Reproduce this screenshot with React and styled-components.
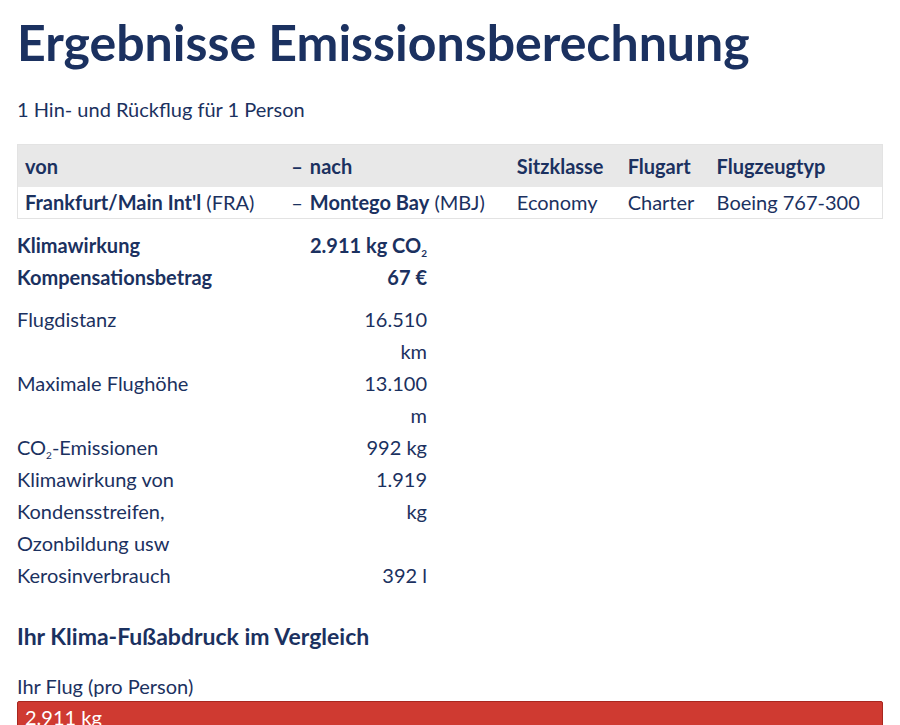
import React from "react";
import styled, { createGlobalStyle } from "styled-components";

const Global = createGlobalStyle`
  body { margin: 0; background: #fff; font-family: Lato, "Open Sans", sans-serif; color: #1b3160; }
`;

const Page = styled.div`
  padding: 0 17px;
`;

const Title = styled.h1`
  margin: 12px 0 0;
  font-size: 50px;
  font-weight: 700;
  line-height: 60px;
`;

const Sub = styled.p`
  margin: 24px 0 22px;
  font-size: 20px;
  line-height: 26px;
`;

const FlightTable = styled.table`
  width: 100%;
  border-collapse: collapse;
  font-size: 20px;
  border: 1px solid #e3e3e3;

  th {
    background: #e8e8e8;
    text-align: left;
    font-weight: 700;
    padding: 8px 8px 8px 7px;
    height: 26px;
  }
  td {
    padding: 3px 8px 4px 7px;
    white-space: nowrap;
  }
  th.dash, td.dash { padding-right: 0; width: 1px; }
`;

const Summary = styled.table`
  width: 410px;
  border-collapse: collapse;
  margin-top: 10px;
  font-size: 20px;
  line-height: 32px;

  td { padding: 0; vertical-align: top; }
  td.num { text-align: right; }
  tr.bold td { font-weight: 700; }
  tr.gap td { padding-top: 10px; }
`;

const Sub2 = styled.sub`
  font-size: 10px;
  vertical-align: -4px;
  line-height: 0;
`;

const NumCell = styled.td`
  width: ${(p) => p.$w || "auto"};
`;

const H2 = styled.h2`
  margin: 30px 0 0;
  font-size: 23px;
  font-weight: 700;
  line-height: 30px;
`;

const BarLabel = styled.div`
  margin-top: 22px;
  font-size: 20px;
  line-height: 26px;
`;

const Bar = styled.div`
  margin-top: 2px;
  height: 30px;
  background: #cf3a31;
  border: 1px solid #a8271f;
  border-radius: 2px;
  color: #fff;
  font-size: 20px;
  line-height: 30px;
  padding-left: 7px;
`;

export default function App() {
  return (
    <Page>
      <Global />
      <Title>Ergebnisse Emissionsberechnung</Title>
      <Sub>1 Hin- und Rückflug für 1 Person</Sub>
      <FlightTable>
        <thead>
          <tr>
            <th>von</th>
            <th className="dash">–</th>
            <th>nach</th>
            <th>Sitzklasse</th>
            <th>Flugart</th>
            <th>Flugzeugtyp</th>
          </tr>
        </thead>
        <tbody>
          <tr>
            <td><b>Frankfurt/Main Int'l</b> (FRA)</td>
            <td className="dash">–</td>
            <td><b>Montego Bay</b> (MBJ)</td>
            <td>Economy</td>
            <td>Charter</td>
            <td>Boeing 767-300</td>
          </tr>
        </tbody>
      </FlightTable>
      <Summary>
        <tbody>
          <tr className="bold">
            <td>Klimawirkung</td>
            <NumCell className="num" $w="120px">2.911 kg CO<Sub2>2</Sub2></NumCell>
          </tr>
          <tr className="bold">
            <td>Kompensationsbetrag</td>
            <td className="num">67 €</td>
          </tr>
          <tr className="gap">
            <td>Flugdistanz</td>
            <NumCell className="num" $w="70px">16.510<br />km</NumCell>
          </tr>
          <tr>
            <td>Maximale Flughöhe</td>
            <td className="num">13.100<br />m</td>
          </tr>
          <tr>
            <td>CO<Sub2>2</Sub2>-Emissionen</td>
            <td className="num">992 kg</td>
          </tr>
          <tr>
            <td>Klimawirkung von Kondensstreifen,<br />Ozonbildung usw</td>
            <td className="num">1.919<br />kg</td>
          </tr>
          <tr>
            <td>Kerosinverbrauch</td>
            <td className="num">392 l</td>
          </tr>
        </tbody>
      </Summary>
      <H2>Ihr Klima-Fußabdruck im Vergleich</H2>
      <BarLabel>Ihr Flug (pro Person)</BarLabel>
      <Bar>2.911 kg</Bar>
    </Page>
  );
}
